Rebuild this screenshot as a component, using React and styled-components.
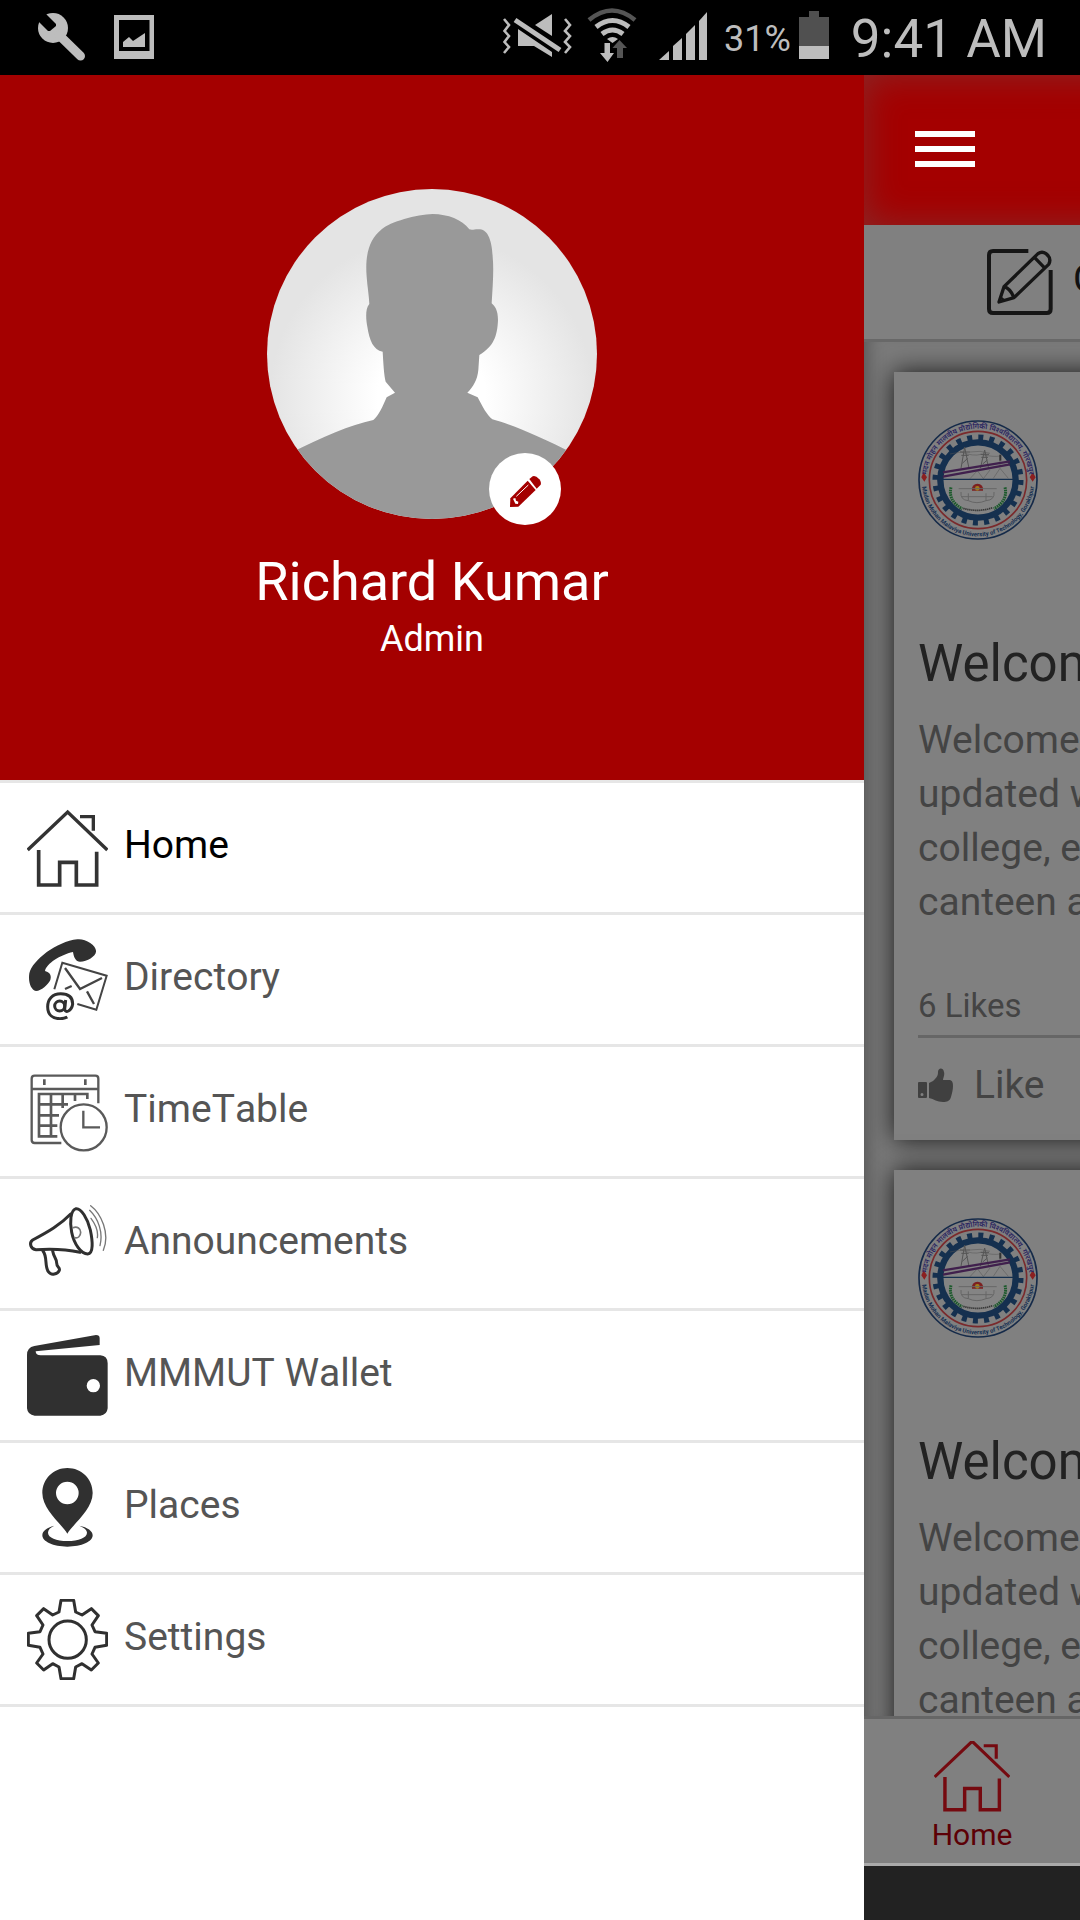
import React from "react";
import styled, { createGlobalStyle } from "styled-components";

const GlobalStyle = createGlobalStyle`
  *, *::before, *::after { box-sizing: border-box; }
  body {
    margin: 0;
    background: #fff;
    font-family: Roboto, "Noto Sans", sans-serif;
  }
  button { font: inherit; border: 0; padding: 0; background: none; cursor: pointer; }
  a { color: inherit; text-decoration: none; }
`;

/* ---------- layout ---------- */

const Screen = styled.div`
  display: flex;
  flex-direction: column;
  height: 100vh;
  overflow: hidden;
`;

const StatusBar = styled.div`
  flex: none;
  display: flex;
  justify-content: space-between;
  height: 75px;
  padding: 0 33px 0 38px;
  background: #000;
  color: #bdbdbd;
`;

const StatusGroup = styled.div`
  display: flex;
  align-items: center;
  gap: ${(p) => p.$gap}px;
`;

const BatteryText = styled.span`
  padding-top: 3px;
  font-size: 36px;
  line-height: 42px;
`;

const Clock = styled.time`
  padding-top: 3px;
  font-size: 53px;
  line-height: 64px;
`;

const Body = styled.div`
  flex: 1;
  display: flex;
  min-height: 0;
`;

/* ---------- drawer ---------- */

const Drawer = styled.aside`
  flex: 0 0 80%;
  background: #fff;
`;

const Profile = styled.header`
  display: flex;
  flex-direction: column;
  align-items: center;
  padding: 114px 24px 120px;
  background: #a40000;
  color: #fff;
`;

const AvatarBox = styled.div`
  position: relative;
  width: 330px;
  height: 330px;
`;

const AvatarArt = styled.svg`
  display: block;
  width: 100%;
  height: 100%;
  border-radius: 50%;
`;

const EditButton = styled.button`
  position: absolute;
  right: 36px;
  bottom: -6px;
  width: 72px;
  height: 72px;
  border-radius: 50%;
  background: #fff;
  svg { display: block; }
`;

const UserName = styled.h1`
  margin: 27px 0 0;
  font-size: 54px;
  font-weight: 400;
  line-height: 72px;
`;

const UserRole = styled.p`
  margin: 0;
  font-size: 36px;
  line-height: 42px;
`;

const Menu = styled.ul`
  margin: 0;
  padding: 0;
  list-style: none;
  border-top: 3px solid #e6e6e6;
`;

const MenuItem = styled.li`
  border-bottom: 3px solid #e6e6e6;
`;

const MenuLink = styled.a`
  display: block;
  padding: 24px 27px;
  font-size: 39px;
  font-kerning: none;
  line-height: 46px;
  color: ${(p) => (p.$active ? "#000" : "#555")};
`;

const MenuIcon = styled.svg`
  width: 81px;
  height: 81px;
  margin-right: 16px;
  vertical-align: middle;
`;

/* ---------- page behind the drawer ---------- */

const Page = styled.div`
  flex: 0 0 100%;
  display: flex;
  flex-direction: column;
  min-height: 0;
  background: #222;
`;

const AppBar = styled.header`
  flex: none;
  display: flex;
  align-items: center;
  height: 150px;
  padding: 0 51px 2px;
  background: #a40000;
  box-shadow: inset 0 0 36px rgba(110, 80, 80, 0.5);
`;

const MenuButton = styled.button`
  display: flex;
  flex-direction: column;
  gap: 9px;
  width: 60px;
`;

const MenuLine = styled.span`
  height: 6px;
  background: #fff;
`;

const ComposeBar = styled.div`
  flex: none;
  padding: 24px 123px;
  background: #808080;
  border-bottom: 3px solid #686868;
`;

const ComposeButton = styled.button`
  display: block;
  font-size: 39px;
  line-height: 46px;
  color: #111;
  svg { margin-right: 20px; vertical-align: middle; }
`;

const Feed = styled.main`
  flex: 1;
  display: flex;
  flex-direction: column;
  gap: 30px;
  min-height: 0;
  padding: 30px;
  overflow: hidden;
  background: #7b7b7b;
  box-shadow: inset 18px 0 18px -14px rgba(0, 0, 0, 0.3);
`;

const Card = styled.article`
  flex: none;
  padding: 48px 24px 32px;
  background: #808080;
  box-shadow: 0 0 24px rgba(0, 0, 0, 0.8);
`;

const Seal = styled.svg`
  display: block;
  width: 120px;
  height: 120px;
`;

const CardTitle = styled.h2`
  margin: 94px 0 19px;
  font-size: 51px;
  font-weight: 400;
  line-height: 60px;
  color: #222;
`;

const CardText = styled.p`
  margin: 0 0 57px;
  font-size: 39px;
  line-height: 54px;
  white-space: pre;
  color: #444;
`;

const LikeCount = styled.p`
  margin: 0;
  padding-bottom: 10px;
  border-bottom: 3px solid #666;
  font-size: 33px;
  line-height: 39px;
  color: #444;
`;

const LikeButton = styled.button`
  display: flex;
  align-items: center;
  gap: 20px;
  margin-top: 24px;
  font-size: 39px;
  line-height: 46px;
  color: #444;
`;

const TabBar = styled.nav`
  flex: none;
  display: flex;
  height: 150px;
  margin-bottom: 54px;
  border-top: 3px solid #666;
  border-bottom: 3px solid #aaa;
  background: #808080;
`;

const Tab = styled.a`
  flex: 0 0 20%;
  display: flex;
  flex-direction: column;
  align-items: center;
  padding-top: 22px;
  font-size: 30px;
  line-height: 35px;
  color: #5c0006;
`;

/* ---------- status icons ---------- */

const WrenchIcon = () => (
  <svg width="48" height="75" viewBox="38 0 48 75" aria-hidden="true">
    <circle cx="53" cy="28" r="15" fill="#bdbdbd" />
    <path d="M46 14L56 24L56 26L50 31L48 31L39 22L34 8Z" fill="#000" />
    <path d="M59 35L80.500 56" stroke="#bdbdbd" strokeWidth="9" strokeLinecap="round" />
  </svg>
);

const PictureIcon = () => (
  <svg width="40" height="75" viewBox="114 0 40 75" aria-hidden="true">
    <path fillRule="evenodd" fill="#bdbdbd" d="M114 15H154V59H114ZM119 20V51H149.500V20Z" />
    <path fill="#bdbdbd" d="M123 47V42L129 37L133 41L145 33V47Z" />
  </svg>
);

const MuteIcon = () => (
  <svg width="70" height="75" viewBox="503 0 70 75" aria-hidden="true" fill="#bdbdbd">
    <g fill="none" stroke="#bdbdbd" strokeWidth="2.600">
      <path d="M505 19L510 25L505.500 31L510 36L505.500 42L510 47L505 53" />
      <path d="M566 19L571 25L566 31L571 36L566 42L571 47L566 53" />
    </g>
    <path d="M516 20L561 50" stroke="#bdbdbd" strokeWidth="5" />
    <path d="M553 14V36L536 25Z" />
    <path d="M519 29L553 52V57L535 46H519Z" />
  </svg>
);

const WifiIcon = () => (
  <svg width="50" height="75" viewBox="588 0 50 75" aria-hidden="true" fill="none">
    <path d="M590 20Q613 1 636 20" stroke="#555" strokeWidth="4.500" />
    <path d="M597 27Q613.500 14 630 27" stroke="#bdbdbd" strokeWidth="5" />
    <path d="M603 34Q613.500 26 624 34" stroke="#bdbdbd" strokeWidth="5" />
    <path d="M608 39Q613.500 35 619 39L613.500 43Z" fill="#bdbdbd" />
    <path d="M605.500 43H611V53H615L608.500 62L601 53H605.500Z" fill="#bdbdbd" />
    <path d="M618 58V48H613.500L620.500 40L628 48H624V58Z" fill="#555" />
  </svg>
);

const SignalIcon = () => (
  <svg width="48" height="75" viewBox="661 0 48 75" aria-hidden="true" fill="#bdbdbd">
    <path d="M661 60L671 51V60Z" />
    <path d="M675 60V46L684 38V60Z" />
    <path d="M688 60V34L697 25V60Z" />
    <path d="M701 60V21L709 12V60Z" />
  </svg>
);

const BatteryIcon = () => (
  <svg width="30" height="75" viewBox="802 0 30 75" aria-hidden="true">
    <path fill="#505050" d="M802 17H812V11H822V17H832V46H802Z" />
    <path fill="#bdbdbd" d="M802 46H832V59H802Z" />
  </svg>
);

/* ---------- drawer art ---------- */

const Avatar = () => (
  <AvatarArt viewBox="81 57 990 990" role="img" aria-label="Profile photo">
    <defs>
      <radialGradient id="glow" gradientUnits="userSpaceOnUse" cx="575" cy="680" r="540">
        <stop offset="0.300" stopColor="#fff" />
        <stop offset="0.900" stopColor="#e4e4e4" />
      </radialGradient>
    </defs>
    <rect x="81" y="57" width="990" height="990" fill="url(#glow)" />
    <path
      fill="#999"
      d="M578 132C530 134 450 155 425 178C385 210 375 260 380 320C382 350 387 375 388 402C375 415 378 450 382 470C388 510 400 540 428 545C430 580 432 615 437 635L465 668L440 682C430 705 415 740 400 750C330 765 250 800 150 850V1060H1000V850C900 800 820 765 757 748C740 735 728 710 713 682L682 668C700 650 712 630 715 600L718 555C760 530 772 500 774 450C774 420 765 410 755 400C758 350 762 300 758 260C756 215 745 180 720 178C705 176 698 182 688 178C665 148 625 133 578 132Z"
    />
  </AvatarArt>
);

const PencilIcon = () => (
  <svg width="72" height="72" viewBox="747 849 216 216" aria-hidden="true">
    <path fill="#a40000" d="M863 932L887 960L835 1010L810 1011L811 985Z" />
    <path fill="#a40000" d="M868 927L878 919Q886 915 898 928Q905 938 902 944L890 956Z" />
    <path d="M829 979L865 945" stroke="#fff" strokeWidth="3" />
    <path d="M819 986L826 984L828 992L835 995L834 1002L826 1001Z" fill="#fff" />
  </svg>
);

const HouseShape = () => (
  <g fill="none" stroke="currentColor">
    <path strokeWidth="10" d="M83 210L203 96L322 210" />
    <path strokeWidth="10" d="M240 110H280V152" />
    <path strokeWidth="11" d="M116 210V315H179V247H229V315H290V215" />
  </g>
);

const icons = {
  home: { box: "81 81 243 243", art: <HouseShape /> },
  directory: {
    box: "81 477 243 243",
    art: (
      <>
        <path fill="#303030" d="M232 478C255 475 290 495 288 515C287 528 262 545 240 545C228 544 222 535 219 516C180 525 140 550 135 573C150 578 155 585 151 600C143 615 125 632 108 633C92 630 84 605 88 580C98 540 170 485 232 478Z" />
        <g fill="none" stroke="#444" strokeWidth="6">
          <path d="M163 628L187 548L320 587L289 689L232 672" />
          <path strokeWidth="7" d="M195 564L240 627L306 594M261 634L282 672M195 627L215 618" />
        </g>
        <g fill="none" stroke="#303030" strokeWidth="9">
          <circle cx="179" cy="678" r="15" />
          <path d="M197 660L194 688Q196 697 205 693Q216 687 218 672C218 650 203 641 182 641C157 641 143 658 143 680C143 706 160 716 180 716Q193 716 202 711" />
        </g>
      </>
    ),
  },
  timetable: {
    box: "81 873 243 243",
    art: (
      <g fill="none" stroke="#5a5a5a" strokeWidth="7">
        <path d="M184 1089H104Q95 1089 95 1080V896Q95 887 104 887H286Q295 887 295 896V970M95 927H295" />
        <path strokeWidth="8" d="M133 898V915M256 898V915" />
        <path strokeWidth="8" d="M172 1069H117V942H262V957M153 942V1069M188 942V984M225 942V963M117 973H204M117 1006H177M117 1037H172" />
        <circle cx="251" cy="1042" r="69" />
        <path d="M250 992V1042H300" />
      </g>
    ),
  },
  announcements: {
    box: "81 69 243 243",
    art: (
      <g fill="none" stroke="#303030" strokeWidth="9" strokeLinejoin="round" strokeLinecap="round">
        <path d="M212 102C180 135 145 155 98 180C86 188 92 208 108 209C150 206 200 208 240 217" />
        <path d="M228 86C243 84 263 115 271 150C278 183 281 221 263 222C244 222 222 193 215 157C209 126 211 91 228 86Z" />
        <path d="M129 213C143 231 133 258 145 275C154 288 173 282 178 271C181 261 170 263 170 249C170 235 162 235 158 213" />
        <path strokeWidth="5" stroke="#777" d="M219 143C232 138 242 146 242 157C242 168 234 176 224 173" />
        <path strokeWidth="4" stroke="#777" d="M272 77C303 100 331 160 310 211M269 91C295 116 310 157 300 197M273 115C288 135 295 155 292 173" />
      </g>
    ),
  },
  wallet: {
    box: "81 465 243 243",
    art: (
      <path
        fill="#303030"
        fillRule="evenodd"
        d="M81 525Q81 502 103 498L288 465Q299 465 299 475V495L107 514Q107 526 122 526H301Q323 528 323 550V685Q321 705 301 707H104Q83 705 81 685ZM280 597A20 20 0 1 0 280 637A20 20 0 1 0 280 597Z"
      />
    ),
  },
  places: {
    box: "81 81 243 243",
    art: (
      <g fill="#303030" fillRule="evenodd">
        <path d="M202 281C188 255 127 210 127 159C127 117 160 84 202 84C245 84 278 117 278 159C278 210 216 255 202 281ZM202 125A34 34 0 1 0 202 193A34 34 0 1 0 202 125Z" />
        <path d="M163 257C140 263 127 273 127 286C127 305 160 320 202 320C245 320 278 305 278 286C278 273 263 262 238 257C251 262 261 269 261 278C261 293 236 303 202 303C169 303 144 293 144 278C144 269 151 262 163 257Z" />
      </g>
    ),
  },
  settings: {
    box: "81 477 243 243",
    art: (
      <g fill="none" stroke="#303030" strokeWidth="9" strokeLinejoin="round">
        <path d="M183 481H221L227 516L246 525L274 506L295 527L276 555L285 575L320 580V616L285 622L276 642L295 669L274 690L246 671L227 681L221 716H183L177 681L158 671L131 690L110 669L129 642L120 622L85 616V580L120 575L129 555L110 527L131 506L158 525L177 516Z" />
        <circle cx="203" cy="599" r="56" />
      </g>
    ),
  },
};

const menu = [
  { id: "home", label: "Home", active: true },
  { id: "directory", label: "Directory" },
  { id: "timetable", label: "TimeTable" },
  { id: "announcements", label: "Announcements" },
  { id: "wallet", label: "MMMUT Wallet" },
  { id: "places", label: "Places" },
  { id: "settings", label: "Settings" },
];

/* ---------- page art ---------- */

const ComposeIcon = () => (
  <svg width="66" height="66" viewBox="412 537 198 198" fill="none" stroke="#161616" aria-hidden="true">
    <path strokeWidth="12" d="M536 543H430Q418 543 418 555V717Q418 729 430 729H591Q603 729 603 717V600" />
    <path strokeWidth="10" strokeLinejoin="round" d="M448 696L463 650L565 551Q577 542 589 551Q607 565 597 583L493 683ZM555 563L584 593M463 650Q482 655 493 683" />
    <path strokeWidth="7" d="M450 680L464 691" />
  </svg>
);

const ThumbIcon = () => (
  <svg width="36" height="34" viewBox="0 0 36 34" fill="#404040" aria-hidden="true">
    <path fillRule="evenodd" d="M1 14H8Q9 14 9 15V29Q9 30 8 30H1Q0 30 0 29V15Q0 14 1 14ZM4 25A1.500 1.500 0 1 0 4 28A1.500 1.500 0 1 0 4 25Z" />
    <path d="M11 15L15 13C19 9 20 8 20 4C20 0 25 -1 26 4C27 7 25 10 25 12H32C35 13 35 16 35 18C35 22 34 25 33 29C32 33 29 34 25 34C19 34 16 31 11 30Z" />
  </svg>
);

const UniversitySeal = ({ id }) => (
  <Seal viewBox="54 60 360 360" role="img" aria-label="University seal">
    <defs>
      <path id={`${id}-top`} d="M80 240A154 154 0 0 1 388 240" />
      <path id={`${id}-low`} d="M65 240A169 169 0 0 0 403 240" />
    </defs>
    <circle cx="234" cy="240" r="177" fill="#808080" stroke="#152a49" strokeWidth="5" />
    <circle cx="234" cy="240" r="146" fill="none" stroke="#7a2a2c" strokeWidth="5" />
    <circle cx="234" cy="240" r="128" fill="none" stroke="#15304f" strokeWidth="17" strokeDasharray="15 18.510" />
    <circle cx="234" cy="240" r="113" fill="#848484" stroke="#15304f" strokeWidth="19" />
    <g fill="none" stroke="#555" strokeWidth="3">
      <path d="M183 205L194 142L207 205M180 156H210M184 166H206M187 190L203 175M241 205L254 150L266 205M242 163H267M244 172H264M248 192L262 180" />
      <path strokeWidth="1.500" d="M150 162L183 156Q220 170 243 163Q280 172 300 168M210 156Q240 150 270 160M300 165V200M280 235L300 205L325 235M210 236L232 212L250 236L270 210" />
    </g>
    <path d="M301 164V182" stroke="#333" strokeWidth="6" />
    <path d="M129 217L330 184" stroke="#40204d" strokeWidth="7" />
    <path d="M129 230L330 193" stroke="#40204d" strokeWidth="7" />
    <path d="M126 238H342" stroke="#15304f" strokeWidth="4" />
    <path d="M216 272A17 17 0 1 1 249 272Z" fill="#7c2020" />
    <circle cx="232" cy="265" r="7" fill="#a0801a" />
    <g fill="none" stroke="#666" strokeWidth="3">
      <path d="M176 266H290M183 276Q180 300 205 302Q230 314 258 302Q285 300 282 276M205 302V280M258 302V280M186 290H278" />
      <path stroke="#333" strokeWidth="5" strokeDasharray="4 2" d="M190 325Q234 338 278 323" />
    </g>
    <g fill="none" stroke="#1c5a2c" strokeWidth="9" strokeDasharray="5 2">
      <path d="M153 262C146 290 160 313 187 326" />
      <path d="M315 262C322 290 308 313 281 326" />
    </g>
    <g fill="#8b2020">
      <path d="M71 217L81 232L73 245L64 232ZM398 217L407 232L398 245L389 232Z" />
    </g>
    <text fontFamily="'Noto Sans', sans-serif" fontSize="22" fontWeight="600" fill="#2a2560" textAnchor="middle">
      <textPath href={`#${id}-top`} startOffset="50%">मदन मोहन मालवीय प्रौद्योगिकी विश्वविद्यालय, गोरखपुर</textPath>
    </text>
    <text fontFamily="Roboto, sans-serif" fontSize="18" fontWeight="700" fill="#152f52" textAnchor="middle">
      <textPath href={`#${id}-low`} startOffset="50%">Madan Mohan Malaviya University of Technology, Gorakhpur</textPath>
    </text>
  </Seal>
);

const posts = [
  {
    id: "post-1",
    title: "Welcome to MMMUT",
    text: "Welcome to MMMUT app, stay\nupdated with the news of your\ncollege, events, placements,\ncanteen and more",
    likes: 6,
  },
  {
    id: "post-2",
    title: "Welcome to MMMUT",
    text: "Welcome to MMMUT app, stay\nupdated with the news of your\ncollege, events, placements,\ncanteen and more",
    likes: 6,
  },
];

export default function App() {
  return (
    <Screen>
      <GlobalStyle />
      <StatusBar>
        <StatusGroup $gap={28}>
          <WrenchIcon />
          <PictureIcon />
        </StatusGroup>
        <StatusGroup $gap={22}>
          <StatusGroup $gap={15}>
            <MuteIcon />
            <WifiIcon />
          </StatusGroup>
          <StatusGroup $gap={17}>
            <SignalIcon />
            <StatusGroup $gap={8}>
              <BatteryText>31%</BatteryText>
              <BatteryIcon />
            </StatusGroup>
          </StatusGroup>
          <Clock>9:41 AM</Clock>
        </StatusGroup>
      </StatusBar>

      <Body>
        <Drawer>
          <Profile>
            <AvatarBox>
              <Avatar />
              <EditButton type="button" aria-label="Edit profile">
                <PencilIcon />
              </EditButton>
            </AvatarBox>
            <UserName>Richard Kumar</UserName>
            <UserRole>Admin</UserRole>
          </Profile>
          <nav>
            <Menu>
              {menu.map((item) => (
                <MenuItem key={item.id}>
                  <MenuLink href={`#${item.id}`} $active={item.active}>
                    <MenuIcon viewBox={icons[item.id].box} color="#333" aria-hidden="true">
                      {icons[item.id].art}
                    </MenuIcon>
                    {item.label}
                  </MenuLink>
                </MenuItem>
              ))}
            </Menu>
          </nav>
        </Drawer>

        <Page>
          <AppBar>
            <MenuButton type="button" aria-label="Menu">
              <MenuLine />
              <MenuLine />
              <MenuLine />
            </MenuButton>
          </AppBar>
          <ComposeBar>
            <ComposeButton type="button">
              <ComposeIcon />
              Create Post
            </ComposeButton>
          </ComposeBar>
          <Feed>
            {posts.map((post) => (
              <Card key={post.id}>
                <UniversitySeal id={post.id} />
                <CardTitle>{post.title}</CardTitle>
                <CardText>{post.text}</CardText>
                <LikeCount>{post.likes} Likes</LikeCount>
                <LikeButton type="button">
                  <ThumbIcon />
                  Like
                </LikeButton>
              </Card>
            ))}
          </Feed>
          <TabBar>
            <Tab href="#home">
              <svg width="76" height="76" viewBox="81 95 243 243" color="#750a10" aria-hidden="true">
                <HouseShape />
              </svg>
              Home
            </Tab>
          </TabBar>
        </Page>
      </Body>
    </Screen>
  );
}
